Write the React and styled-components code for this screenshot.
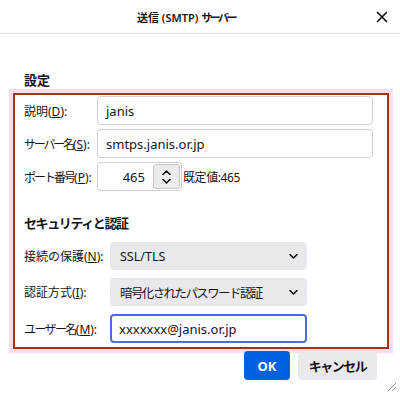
import styled, { createGlobalStyle } from 'styled-components';

const GlobalStyle = createGlobalStyle`
  html, body {
    margin: 0;
    padding: 0;
    background: #fff;
  }
  body {
    font-family: "Noto Sans", "Noto Sans CJK JP", sans-serif;
    color: #15141a;
  }
`;

const Dialog = styled.div`
  width: 400px;
  height: 394px;
  display: flex;
  flex-direction: column;
  position: relative;
  overflow: hidden;
  background: #fff;
`;

const TitleBar = styled.header`
  height: 33px;
  display: flex;
  align-items: center;
  border-bottom: 1px solid #e3e3e8;
  flex-shrink: 0;
`;

const Title = styled.h1`
  flex: 1;
  margin: 0;
  text-align: center;
  font-size: 11px;
  font-weight: 600;
`;

const Kana = styled.span`
  letter-spacing: ${p => p.$ls}px;
`;

const CloseButton = styled.button`
  width: 20px;
  height: 20px;
  margin-right: 8px;
  padding: 0;
  border: none;
  background: none;
  display: flex;
  align-items: center;
  justify-content: center;
`;

const Content = styled.main`
  padding: 37px 11px 0 13px;
  display: flex;
  flex-direction: column;
`;

const Heading = styled.h2`
  margin: ${p => p.$top || 0}px 0 0 ${p => p.$indent || 0}px;
  font-size: 13px;
  line-height: 18px;
  font-weight: 700;
  letter-spacing: ${p => p.$ls || 0}px;
`;

const Frame = styled.section`
  margin-top: 4px;
  border: 2px solid #9f3516;
  box-shadow: 0 0 0 4px #fcdcf2;
  padding: 1px 14px 4px 9px;
  display: flex;
  flex-direction: column;
`;

const FieldGrid = styled.div`
  display: grid;
  grid-template-columns: ${p => p.$labelWidth}px 1fr;
  row-gap: ${p => p.$gap}px;
  align-items: center;
  margin-top: ${p => p.$top || 0}px;
`;

const Label = styled.label`
  font-size: 12px;
  white-space: nowrap;
`;

const TextInput = styled.div`
  height: ${p => p.$h || 29}px;
  box-sizing: border-box;
  width: ${p => (p.$w ? `${p.$w}px` : '100%')};
  border: ${p => (p.$focused ? '2px solid #4f6bdc' : '1px solid #cfcfd6')};
  border-radius: 4px;
  padding: 0 ${p => (p.$focused ? 7 : 8)}px;
  display: flex;
  align-items: center;
  font-size: 13px;
  background: #fff;
`;

const PortRow = styled.div`
  display: flex;
  align-items: center;
  gap: 1px;
  font-size: 12px;
  letter-spacing: -0.4px;
`;

const NumberInput = styled.div`
  width: 85px;
  height: 29px;
  box-sizing: border-box;
  border: 1px solid #cfcfd6;
  border-radius: 4px;
  display: flex;
  align-items: center;
  justify-content: flex-end;
  padding-right: 1px;
  gap: 8px;
  font-size: 13px;
  letter-spacing: 0;
`;

const Spinner = styled.div`
  width: 27px;
  height: 25px;
  box-sizing: border-box;
  border: 1px solid #c4c4c9;
  border-radius: 3px;
  background: #ececef;
  display: flex;
  flex-direction: column;
  align-items: center;
  justify-content: center;
  gap: 4px;
`;

const Select = styled.div`
  width: 197px;
  height: 28px;
  box-sizing: border-box;
  border-radius: 4px;
  background: #e9e9ed;
  padding: 0 9px 0 10px;
  display: flex;
  align-items: center;
  justify-content: space-between;
  font-size: 12.5px;
`;

const SelectText = styled.span`
  letter-spacing: ${p => p.$ls || 0}px;
`;

const ButtonRow = styled.div`
  display: flex;
  justify-content: flex-end;
  gap: 8px;
  margin-top: 2px;
  padding-right: 12px;
`;

const Button = styled.button`
  height: 29px;
  min-width: ${p => p.$w}px;
  border: none;
  border-radius: 4px;
  font-family: inherit;
  font-size: 13px;
  font-weight: 700;
  letter-spacing: ${p => p.$ls || 0}px;
  background: ${p => (p.$primary ? '#0061e0' : '#e9e9ed')};
  color: ${p => (p.$primary ? '#fff' : '#15141a')};
  padding: 0 10px;
`;

const Grip = styled.svg`
  position: absolute;
  right: 3px;
  bottom: 2px;
`;

const Chevron = ({ up }) => (
  <svg width="9" height="5" viewBox="0 0 9 5">
    <polyline
      points={up ? '1,4.5 4.5,1 8,4.5' : '1,0.5 4.5,4 8,0.5'}
      fill="none"
      stroke="#15141a"
      strokeWidth="1.6"
      strokeLinecap="round"
      strokeLinejoin="round"
    />
  </svg>
);

const SelectBox = ({ children, ls }) => (
  <Select>
    <SelectText $ls={ls}>{children}</SelectText>
    <Chevron />
  </Select>
);

const App = () => {
  return (
    <>
      <GlobalStyle />
      <Dialog lang="ja">
        <TitleBar>
          <Title>送信 (SMTP) <Kana $ls={-2.5}>サーバー</Kana></Title>
          <CloseButton aria-label="閉じる">
            <svg width="12" height="12" viewBox="0 0 12 12">
              <path d="M1.5 1.5 L10.5 10.5 M10.5 1.5 L1.5 10.5" stroke="#15141a" strokeWidth="1.7" strokeLinecap="round" />
            </svg>
          </CloseButton>
        </TitleBar>
        <Content>
          <Heading $indent={11}>設定</Heading>
          <Frame>
            <FieldGrid $labelWidth={73} $gap={4}>
              <Label>説明(<u>D</u>):</Label>
              <TextInput>janis</TextInput>
              <Label><Kana $ls={-2.2}>サーバー名</Kana>(<u>S</u>):</Label>
              <TextInput>smtps.janis.or.jp</TextInput>
              <Label><Kana $ls={-2}>ポート番号</Kana>(<u>P</u>):</Label>
              <PortRow>
                <NumberInput>
                  <span>465</span>
                  <Spinner>
                    <Chevron up />
                    <Chevron />
                  </Spinner>
                </NumberInput>
                <span>既定値:465</span>
              </PortRow>
            </FieldGrid>
            <Heading $top={23} $ls={-1.4}>セキュリティと認証</Heading>
            <FieldGrid $labelWidth={86} $gap={8} $top={10}>
              <Label>接続の保護(<u>N</u>):</Label>
              <SelectBox>SSL/TLS</SelectBox>
              <Label>認証方式(<u>I</u>):</Label>
              <SelectBox ls={-1.6}>暗号化されたパスワード認証</SelectBox>
              <Label><Kana $ls={-1.6}>ユーザー名</Kana>(<u>M</u>):</Label>
              <TextInput $w={197} $h={29} $focused>xxxxxxx@janis.or.jp</TextInput>
            </FieldGrid>
          </Frame>
          <ButtonRow>
            <Button $primary $w={46}>OK</Button>
            <Button $w={79} $ls={-1.5}>キャンセル</Button>
          </ButtonRow>
        </Content>
        <Grip width="12" height="12" viewBox="0 0 12 12">
          <path d="M11 3 L3 11 M11 7 L7 11" stroke="#8f8f9d" strokeWidth="1" />
        </Grip>
      </Dialog>
    </>
  );
};

export default App;
